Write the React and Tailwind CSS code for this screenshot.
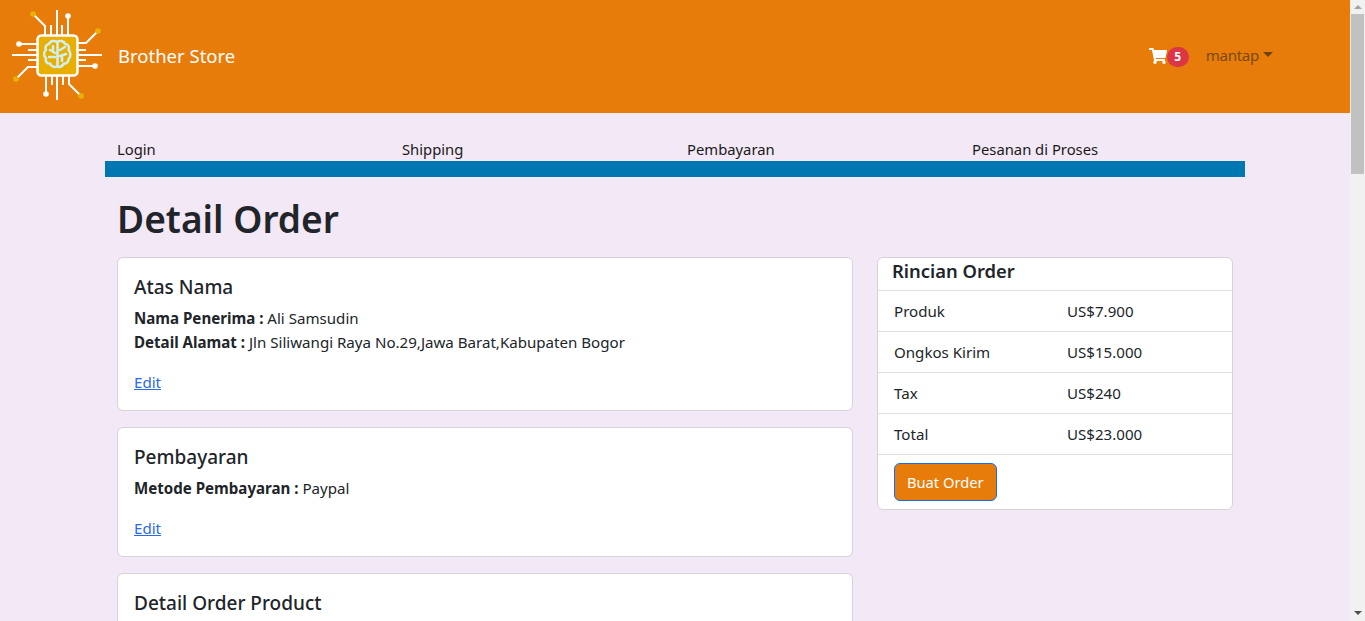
import React from "react";
import { FaShoppingCart } from "react-icons/fa";

function Logo() {
  const t = "#ffffff";
  const y = "#e8b10a";
  const Trace = ({ d }) => <path d={d} fill="none" stroke={t} strokeWidth="2" />;
  const half = (
    <g>
      <Trace d="M57 10V36M51 25V36M62 25V36M68 16V36M33 14L45 26V36" />
      <circle cx="68" cy="16" r="2.8" fill={t} />
      <circle cx="33" cy="14" r="2.8" fill={y} />
      <Trace d="M12 55H37M28 50H37M28 60H37M19 44H37M16 79L28 67H37" />
      <circle cx="19" cy="44" r="2.8" fill={t} />
      <circle cx="16" cy="79" r="2.8" fill={y} />
    </g>
  );
  return (
    <svg width="114" height="110" viewBox="0 0 114 110" className="shrink-0 mb-[3px]">
      {half}
      <g transform="rotate(180 57 55)">{half}</g>
      <rect x="37.5" y="35.5" width="40" height="40" rx="4" fill="#e8ae00" stroke={t} strokeWidth="2.6" />
      <g fill="none" stroke="#d3efec" strokeWidth="2.6" strokeLinecap="round" strokeLinejoin="round">
        <path d="M49 44C50 41 54 40 57 42C60 40 64 41 65 44C68 44 70 47 68.5 50C71 52 71 57 68.5 59C69 62 66 64 64 63.5C62 67 58 68 57.5 66C55 68 51 66.5 50 63.5C47 64 45 61 46 58.5C43.5 56 43.5 52 46 50C44.5 47 46.5 44 49 44Z" />
        <path d="M57.5 42V66M50 50L55 53M49 57H55M53 46V50M60 50L65 47M60 56L66 54M62 56V61" />
      </g>
    </svg>
  );
}

function Card({ title, children }) {
  return (
    <div className="bg-white border border-[#d5d2d8] rounded-[6px] px-4 pb-4 pt-[17px]">
      <h5 className="text-[19px] leading-[24px] font-medium text-[#212529] mb-[7px]">{title}</h5>
      {children}
    </div>
  );
}

function Edit() {
  return <a className="block mt-4 text-[#2a6ae8] underline">Edit</a>;
}

const rows = [
  ["Produk", "US$7.900"],
  ["Ongkos Kirim", "US$15.000"],
  ["Tax", "US$240"],
  ["Total", "US$23.000"],
];

export default function App() {
  return (
    <div className="flex h-[621px] overflow-hidden bg-[#f3e9f6] text-[#212529] text-[15.1px] leading-[24px] font-['Noto_Sans','Open_Sans',sans-serif]">
      <div className="flex-1 min-w-0">
        <nav className="h-[113px] bg-[#e87c0a] flex items-center pr-[77px]">
          <Logo />
          <span className="ml-1 mb-[2px] text-white text-[18.5px]">Brother Store</span>
          <div className="ml-auto flex items-center">
            <FaShoppingCart className="text-white text-[18px] mb-[2px]" />
            <span className="w-[22px] h-[20px] rounded-full bg-[#dc3545] text-white text-[12px] font-bold flex items-center justify-center">5</span>
            <span className="ml-[17px] text-[#7a4a0c] mb-[3px] tracking-[-0.3px]">mantap</span>
            <span className="ml-[4px] mb-[4px] w-0 h-0 border-x-[5px] border-x-transparent border-t-[5px] border-t-[#6f4208]"></span>
          </div>
        </nav>

        <main className="w-[1140px] mx-auto mt-[24px]">
          <div className="grid grid-cols-[repeat(4,285px)] px-3 h-[24px] text-[#1a1a1a] text-[14.8px]">
            <span>Login</span>
            <span>Shipping</span>
            <span>Pembayaran</span>
            <span>Pesanan di Proses</span>
          </div>
          <div className="h-4 bg-[#0077b0]"></div>

          <div className="px-3">
            <h1 className="text-[37.1px] leading-[48px] font-semibold mt-[18px] mb-[14px]">Detail Order</h1>
            <div className="flex gap-6 items-start">
              <div className="w-[736px] flex flex-col gap-4">
                <Card title="Atas Nama">
                  <p><b className="font-bold">Nama Penerima : </b>Ali Samsudin</p>
                  <p><b className="font-bold">Detail Alamat : </b>Jln Siliwangi Raya No.29,Jawa Barat,Kabupaten Bogor</p>
                  <Edit />
                </Card>
                <Card title="Pembayaran">
                  <p><b className="font-bold">Metode Pembayaran : </b>Paypal</p>
                  <Edit />
                </Card>
                <Card title="Detail Order Product">
                  <div className="h-[40px]"></div>
                </Card>
              </div>

              <div className="w-[356px] bg-white border border-[#d5d2d8] rounded-[6px]">
                <h3 className="text-[18.4px] leading-[24px] font-semibold px-[14px] pt-px pb-[7px]">Rincian Order</h3>
                {rows.map(([a, b]) => (
                  <div key={a} className="flex border-t border-[#dfdfdf] px-4 py-2">
                    <span className="w-[173px]">{a}</span>
                    <span>{b}</span>
                  </div>
                ))}
                <div className="border-t border-[#dfdfdf] px-4 py-2">
                  <button className="h-[38px] px-3 rounded-[6px] bg-[#e87c0a] border border-[#0d6efd] text-white text-[14.7px]">Buat Order</button>
                </div>
              </div>
            </div>
          </div>
        </main>
      </div>

      <aside className="w-[15px] shrink-0 bg-[#f1f1f1] flex flex-col items-center">
        <div className="h-[14px] flex items-center justify-center">
          <span className="w-0 h-0 border-x-[4px] border-x-transparent border-b-[4px] border-b-[#a3a3a3]"></span>
        </div>
        <div className="w-[15px] h-[160px] px-px"><div className="h-full bg-[#c1c1c1]"></div></div>
        <div className="mt-auto h-[17px] flex items-center justify-center">
          <span className="w-0 h-0 border-x-[4px] border-x-transparent border-t-[4px] border-t-[#505050]"></span>
        </div>
      </aside>
    </div>
  );
}
